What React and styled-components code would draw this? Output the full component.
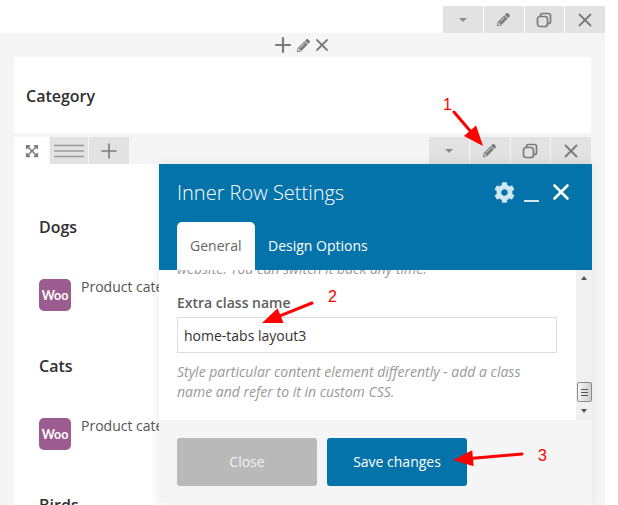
import styled, { createGlobalStyle } from "styled-components";
import { FaCog, FaExpandArrowsAlt, FaPencilAlt } from "react-icons/fa";
import { X, Plus } from "lucide-react";

const GlobalStyle = createGlobalStyle`
  html, body {
    margin: 0;
    padding: 0;
    background: #fff;
  }
  * {
    box-sizing: border-box;
  }
`;

const Page = styled.div`
  position: relative;
  width: 618px;
  height: 505px;
  overflow: hidden;
  background: #fff;
  font-family: "Open Sans", "Liberation Sans", sans-serif;
  color: #333;
`;

/* Barras de acciones */
const TopActions = styled.div`
  display: flex;
  justify-content: flex-end;
  width: 605px;
  height: 33px;
  padding-top: 6px;
`;

const ActionGroup = styled.div`
  display: flex;
  gap: 1px;
  height: 27px;
  width: 162px;
`;

const ActionButton = styled.div`
  flex: 1;
  display: flex;
  align-items: center;
  justify-content: center;
  background: #e2e2e2;
  color: #7b7b7b;
`;

const Caret = styled.span`
  width: 0;
  height: 0;
  border-left: 4px solid transparent;
  border-right: 4px solid transparent;
  border-top: 4px solid #8a8a8a;
`;

const Panel = styled.div`
  display: flex;
  flex-direction: column;
  width: 605px;
  height: 472px;
  padding: 0 14px;
  background: #f5f5f5;
`;

const PanelControls = styled.div`
  display: flex;
  align-items: center;
  justify-content: center;
  flex-shrink: 0;
  height: 24px;
  padding-right: 3px;
  color: #7b7b7b;

  svg + svg {
    margin-left: 2px;
  }
`;

const CategoryCard = styled.div`
  display: flex;
  align-items: center;
  flex-shrink: 0;
  height: 76px;
  margin-bottom: 4px;
  padding: 1px 12px 0;
  background: #fff;
`;

const Heading = styled.h2`
  margin: 0;
  font-size: 16px;
  line-height: 22px;
  font-weight: 600;
  color: #2f2f2f;
`;

const RowBar = styled.div`
  display: flex;
  justify-content: space-between;
  flex-shrink: 0;
  height: 27px;
`;

const RowTabs = styled.div`
  display: flex;
  gap: 1px;
`;

const RowTab = styled.div`
  display: flex;
  align-items: center;
  justify-content: center;
  width: ${(p) => p.$width}px;
  background: ${(p) => (p.$active ? "#fff" : "#e2e2e2")};
  color: #7b7b7b;
`;

const RowBody = styled.div`
  flex: 1;
  min-height: 0;
  overflow: hidden;
  padding: 52px 25px 0;
  background: #fff;
`;

const CategoryGroup = styled.section`
  margin-bottom: ${(p) => p.$gap || 0}px;
`;

const ProductRow = styled.div`
  display: flex;
  gap: 10px;
  margin-top: 41px;
`;

const WooLogo = styled.div`
  display: flex;
  align-items: center;
  justify-content: center;
  width: 32px;
  height: 32px;
  border-radius: 5px;
  background: #9b5c8f;
  color: #fff;
  font-family: "Lato", sans-serif;
  font-size: 12.5px;
  font-weight: 700;
`;

const ProductName = styled.span`
  font-size: 14px;
  line-height: 16px;
  color: #555;
`;

/* Modal */
const Modal = styled.div`
  position: absolute;
  left: 159px;
  top: 164px;
  display: flex;
  flex-direction: column;
  width: 433px;
  height: 339px;
  background: #fff;
  box-shadow: 0 0 12px rgba(0, 0, 0, 0.08);
`;

const ModalHeader = styled.header`
  display: flex;
  flex-direction: column;
  justify-content: space-between;
  flex-shrink: 0;
  height: 106px;
  padding: 0 18px;
  background: #0473aa;
  color: #fff;
`;

const TitleRow = styled.div`
  display: flex;
  align-items: center;
  justify-content: space-between;
  height: 56px;
`;

const ModalTitle = styled.h3`
  margin: 0;
  font-size: 20px;
  font-weight: 300;
`;

const HeaderIcons = styled.div`
  display: flex;
  align-items: center;
  gap: 9px;
  color: #fff;
`;

const Minimize = styled.span`
  width: 15px;
  height: 2px;
  margin-top: 18px;
  background: #d5e8f3;
`;

const Tabs = styled.div`
  display: flex;
  height: 48px;
`;

const Tab = styled.div`
  display: flex;
  align-items: center;
  padding: 0 13px 1px;
  width: ${(p) => (p.$active ? "78px" : "auto")};
  border-radius: 5px 5px 0 0;
  background: ${(p) => (p.$active ? "#fff" : "transparent")};
  color: ${(p) => (p.$active ? "#666" : "#fff")};
  font-size: 14px;
`;

const ModalBody = styled.div`
  display: flex;
  flex-shrink: 0;
  height: 150px;
  overflow: hidden;
`;

const BodyContent = styled.div`
  flex: 1;
  padding: 0 19px 0 18px;
`;

const HelpText = styled.p`
  margin: ${(p) => p.$margin};
  font-size: 14px;
  line-height: 20px;
  font-style: italic;
  color: #999;
`;

const FieldLabel = styled.label`
  display: block;
  margin-top: 14px;
  font-size: 14px;
  line-height: 20px;
  font-weight: 600;
  color: #5e5e5e;
`;

const TextField = styled.div`
  display: flex;
  align-items: center;
  height: 36px;
  margin-top: 4px;
  padding: 0 6px;
  border: 1px solid #ddd;
  font-size: 14px;
  color: #333;
`;

const Scrollbar = styled.div`
  display: flex;
  flex-direction: column;
  align-items: center;
  width: 16px;
  background: #f0f0f0;
`;

const ScrollUp = styled.span`
  margin-top: 6px;
  border-left: 3.5px solid transparent;
  border-right: 3.5px solid transparent;
  border-bottom: 4px solid #555;
`;

const ScrollThumb = styled.div`
  display: flex;
  flex-direction: column;
  align-items: center;
  justify-content: center;
  gap: 2px;
  width: 15px;
  height: 20px;
  margin-top: 102px;
  border: 1px solid #8a8a8a;
  border-radius: 2px;
  background: linear-gradient(90deg, #f5f5f5, #cfcfcf);
`;

const ThumbLine = styled.span`
  width: 7px;
  height: 1px;
  background: #555;
`;

const ScrollDown = styled.span`
  margin-top: 7px;
  border-left: 3.5px solid transparent;
  border-right: 3.5px solid transparent;
  border-top: 4px solid #555;
`;

const ModalFooter = styled.footer`
  flex: 1;
  display: flex;
  gap: 10px;
  padding: 18px 18px 0;
  background: #f5f5f5;
`;

const FooterButton = styled.div`
  display: flex;
  align-items: center;
  justify-content: center;
  width: 140px;
  height: 48px;
  padding-bottom: 2px;
  border-radius: 3px;
  background: ${(p) => (p.$primary ? "#0473aa" : "#b9b9b9")};
  color: ${(p) => (p.$primary ? "#fff" : "#f2f2f2")};
  font-size: 14px;
`;

/* Anotaciones en rojo */
const Annotations = styled.svg`
  position: absolute;
  inset: 0;
  pointer-events: none;
`;

const StepNumber = styled.span`
  position: absolute;
  left: ${(p) => p.$x}px;
  top: ${(p) => p.$y}px;
  font-family: "Liberation Sans", sans-serif;
  font-size: 16px;
  line-height: 18px;
  color: #f00;
`;

function CopyIcon({ size = 16 }) {
  return (
    <svg width={size} height={size} viewBox="0 0 16 16" fill="none" stroke="currentColor" strokeWidth="1.7">
      <rect x="1.5" y="4.5" width="10" height="10" rx="2.5" />
      <path d="M4.5 4.2V3.5a2 2 0 0 1 2-2h6a2 2 0 0 1 2 2v6a2 2 0 0 1-2 2h-1" />
    </svg>
  );
}

function Hamburger() {
  return (
    <svg width="30" height="14" viewBox="0 0 30 14" fill="none" stroke="#9a9a9a" strokeWidth="1.6">
      <path d="M0 1.5h30M0 7h30M0 12.5h30" />
    </svg>
  );
}

function Arrow({ x1, y1, x2, y2 }) {
  // Punta de flecha calculada a partir de la dirección del trazo
  const angle = Math.atan2(y2 - y1, x2 - x1);
  const len = 20;
  const wide = 8;
  const bx = x2 - Math.cos(angle) * len;
  const by = y2 - Math.sin(angle) * len;
  const px = -Math.sin(angle) * wide;
  const py = Math.cos(angle) * wide;
  return (
    <g>
      <line x1={x1} y1={y1} x2={bx} y2={by} stroke="#f00" strokeWidth="3" strokeLinecap="round" />
      <polygon points={`${x2},${y2} ${bx + px},${by + py} ${bx - px},${by - py}`} fill="#f00" />
    </g>
  );
}

function Actions() {
  return (
    <ActionGroup>
      <ActionButton><Caret /></ActionButton>
      <ActionButton><FaPencilAlt size={13} /></ActionButton>
      <ActionButton><CopyIcon /></ActionButton>
      <ActionButton><X size={22} strokeWidth={2} /></ActionButton>
    </ActionGroup>
  );
}

export default function App() {
  return (
    <Page>
      <GlobalStyle />

      <TopActions>
        <Actions />
      </TopActions>

      <Panel>
        <PanelControls>
          <Plus size={24} strokeWidth={2.2} />
          <FaPencilAlt size={13} />
          <X size={20} strokeWidth={2.2} />
        </PanelControls>

        <CategoryCard>
          <Heading>Category</Heading>
        </CategoryCard>

        <RowBar>
          <RowTabs>
            <RowTab $width={35} $active><FaExpandArrowsAlt size={14} /></RowTab>
            <RowTab $width={38}><Hamburger /></RowTab>
            <RowTab $width={40}><Plus size={24} strokeWidth={1.6} /></RowTab>
          </RowTabs>
          <Actions />
        </RowBar>

        <RowBody>
          <CategoryGroup $gap={44}>
            <Heading>Dogs</Heading>
            <ProductRow>
              <WooLogo>Woo</WooLogo>
              <ProductName>Product category</ProductName>
            </ProductRow>
          </CategoryGroup>
          <CategoryGroup $gap={44}>
            <Heading>Cats</Heading>
            <ProductRow>
              <WooLogo>Woo</WooLogo>
              <ProductName>Product category</ProductName>
            </ProductRow>
          </CategoryGroup>
          <CategoryGroup>
            <Heading>Birds</Heading>
          </CategoryGroup>
        </RowBody>
      </Panel>

      <Modal>
        <ModalHeader>
          <TitleRow>
            <ModalTitle>Inner Row Settings</ModalTitle>
            <HeaderIcons>
              <FaCog size={21} color="#cfe6f3" />
              <Minimize />
              <X size={26} strokeWidth={2.4} />
            </HeaderIcons>
          </TitleRow>
          <Tabs>
            <Tab $active>General</Tab>
            <Tab>Design Options</Tab>
          </Tabs>
        </ModalHeader>

        <ModalBody>
          <BodyContent>
            <HelpText $margin="-11px 0 0">website. You can switch it back any time.</HelpText>
            <FieldLabel>Extra class name</FieldLabel>
            <TextField>home-tabs layout3</TextField>
            <HelpText $margin="9px 0 0">
              Style particular content element differently - add a class name and refer to it in custom CSS.
            </HelpText>
          </BodyContent>
          <Scrollbar>
            <ScrollUp />
            <ScrollThumb>
              <ThumbLine />
              <ThumbLine />
              <ThumbLine />
            </ScrollThumb>
            <ScrollDown />
          </Scrollbar>
        </ModalBody>

        <ModalFooter>
          <FooterButton>Close</FooterButton>
          <FooterButton $primary>Save changes</FooterButton>
        </ModalFooter>
      </Modal>

      <Annotations width="618" height="505">
        <Arrow x1={454} y1={112} x2={483} y2={146} />
        <Arrow x1={312} y1={303} x2={262} y2={323} />
        <Arrow x1={522} y1={454} x2={453} y2={460} />
      </Annotations>
      <StepNumber $x={443} $y={96}>1</StepNumber>
      <StepNumber $x={328} $y={288}>2</StepNumber>
      <StepNumber $x={538} $y={447}>3</StepNumber>
    </Page>
  );
}
